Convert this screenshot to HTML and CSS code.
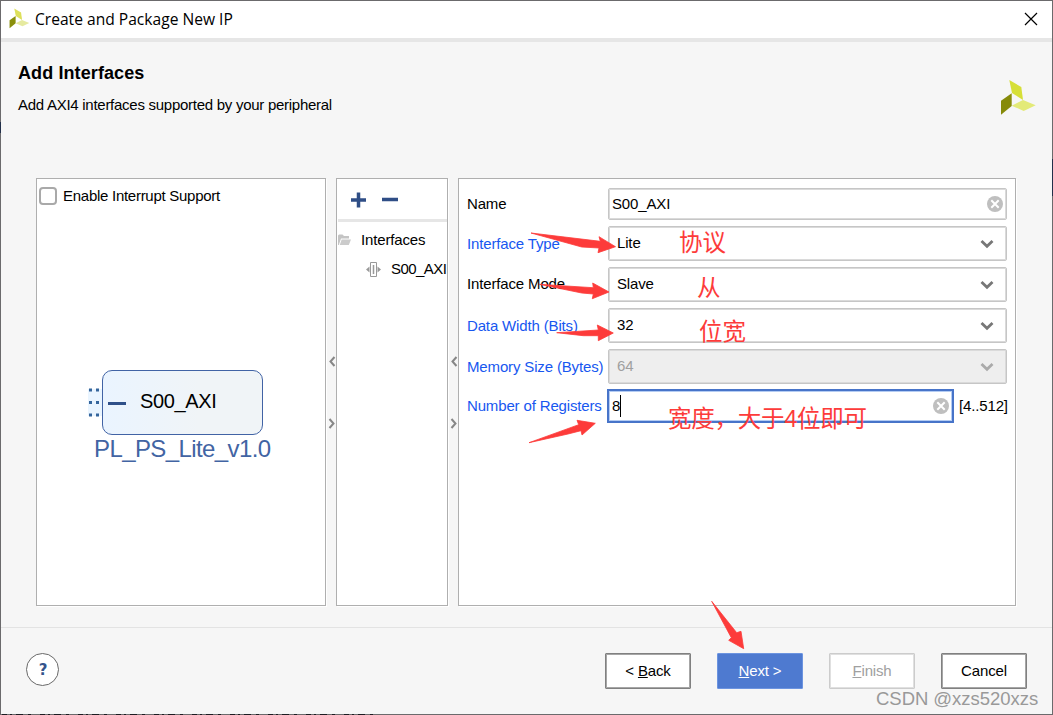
FILE: index.html
```html
<!DOCTYPE html>
<html lang="en">
<head>
  <meta charset="UTF-8" />
  <meta name="viewport" content="width=device-width, initial-scale=1" />
  <title>Create and Package New IP</title>
  <link rel="stylesheet" href="styles.css">
</head>
<body>
  <div class="dialog">
    <header class="titlebar">
      <svg class="logo-small" width="21" height="21" viewBox="1000 79 37 37">
        <polygon points="1001,100.7 1011.7,93.3 1011.7,106 1001,114.7" fill="#8a8f0c" />
        <polygon points="1009.3,80 1021.3,87 1023,100 1012,93" fill="#dde05a" />
        <polygon points="1011.7,105.7 1023,100 1035.7,105.3 1023.7,111" fill="#e6eaa0" />
      </svg>
      <span class="title">Create and Package New IP</span>
      <svg class="close" width="14" height="14" viewBox="0 0 14 14">
        <path d="M1 1L13 13M13 1L1 13" stroke="#000" stroke-width="1.2" fill="none" />
      </svg>
    </header>

    <section class="heading">
      <div>
        <h1>Add Interfaces</h1>
        <p>Add AXI4 interfaces supported by your peripheral</p>
      </div>
      <svg class="logo" width="37" height="37" viewBox="1000 79 37 37">
        <polygon points="1001,100.7 1011.7,93.3 1011.7,106 1001,114.7" fill="#868a09" />
        <polygon points="1009.3,80 1021.3,87 1023,100 1012,93" fill="#d6df38" />
        <polygon points="1011.7,105.7 1023,100 1035.7,105.3 1023.7,111" fill="#e3ea78" />
      </svg>
    </section>

    <main class="panels">
      <div class="panel preview">
        <label class="check"><span class="box"></span><span class="check-text">Enable Interrupt Support</span></label>
        <div class="block">
          <svg class="port" width="14" height="31" viewBox="0 0 14 31">
            <rect width="14" height="27" y="2" fill="#eaf5ff" />
            <path d="M1 3h14M1 15.500h14M1 28h14" stroke="#34659c" stroke-width="3" stroke-dasharray="3 4" />
          </svg>
          <div class="ip"><i class="bus"></i><span class="ip-port">S00_AXI</span></div>
        </div>
        <div class="ip-name">PL_PS_Lite_v1.0</div>
      </div>

      <div class="splitter">
        <svg width="8" height="76" viewBox="0 0 8 76"><path d="M6.500 2L2.500 6.500L6.500 11M1.500 64L5.500 68.500L1.500 73" /></svg>
      </div>

      <div class="panel tree">
        <div class="toolbar">
          <svg width="48" height="16" viewBox="0 0 48 16">
            <path d="M0 8h15M7.500 0.500v15M31 7.500h16" stroke="#2f4e86" stroke-width="3.500" />
          </svg>
        </div>
        <div class="node root">
          <svg width="13" height="12" viewBox="0 0 13 12">
            <path d="M0 11V1.500L1 .5h3.500l1.500 1.500h5v2.500H3L.8 11z" fill="#c4c4c4" />
            <path d="M3.700 5.500H13L10.800 11H1.700z" fill="#cbcbcb" />
          </svg>
          <span>Interfaces</span>
        </div>
        <div class="node leaf">
          <svg width="15" height="15" viewBox="0 0 15 15">
            <path d="M4.500 .5h6v14h-6z" fill="none" stroke="#999" />
            <path d="M7.500 3v9" stroke="#999" stroke-width="1.500" />
            <path d="M3.500 4.500v6L0 7.500zM11.500 4.500v6L15 7.500z" fill="#999" />
          </svg>
          <span>S00_AXI</span>
        </div>
      </div>

      <div class="splitter">
        <svg width="8" height="76" viewBox="0 0 8 76"><path d="M6.500 2L2.500 6.500L6.500 11M1.500 64L5.500 68.500L1.500 73" /></svg>
      </div>

      <div class="panel form">
        <div class="row name-row">
          <span class="label black">Name</span>
          <div class="field">
            <span>S00_AXI</span>
            <svg class="clear" width="16" height="16" viewBox="0 0 16 16"><circle cx="8" cy="8" r="8" fill="#bfbfbf" /><path d="M4.300 4.300l7.400 7.400M11.700 4.300l-7.400 7.400" stroke="#fff" stroke-width="2" /></svg>
          </div>
        </div>
        <div class="row">
          <span class="label">Interface Type</span>
          <div class="field select"><span>Lite</span><svg class="chevron" width="14" height="10" viewBox="0 0 14 10"><path d="M1.500 2L7 7.300L12.500 2" /></svg></div>
        </div>
        <div class="row mode-row">
          <span class="label black">Interface Mode</span>
          <div class="field select"><span>Slave</span><svg class="chevron" width="14" height="10" viewBox="0 0 14 10"><path d="M1.500 2L7 7.300L12.500 2" /></svg></div>
        </div>
        <div class="row">
          <span class="label">Data Width (Bits)</span>
          <div class="field select"><span>32</span><svg class="chevron" width="14" height="10" viewBox="0 0 14 10"><path d="M1.500 2L7 7.300L12.500 2" /></svg></div>
        </div>
        <div class="row">
          <span class="label">Memory Size (Bytes)</span>
          <div class="field select disabled"><span>64</span><svg class="chevron" width="14" height="10" viewBox="0 0 14 10"><path d="M1.500 2L7 7.300L12.500 2" /></svg></div>
        </div>
        <div class="row reg-row">
          <span class="label">Number of Registers</span>
          <div class="field focus">
            <span>8</span><i class="caret"></i>
            <svg class="clear" width="16" height="16" viewBox="0 0 16 16"><circle cx="8" cy="8" r="8" fill="#bfbfbf" /><path d="M4.300 4.300l7.400 7.400M11.700 4.300l-7.400 7.400" stroke="#fff" stroke-width="2" /></svg>
          </div>
          <span class="range">[4..512]</span>
        </div>
      </div>
    </main>

    <footer class="footer">
      <button class="help">?</button>
      <div class="buttons">
        <button class="btn">&lt; <u>B</u>ack</button>
        <button class="btn primary"><u>N</u>ext &gt;</button>
        <button class="btn off"><u>F</u>inish</button>
        <button class="btn">Cancel</button>
      </div>
    </footer>
  </div>

  <!-- notes and arrows drawn over the dialog -->
  <svg class="notes" width="1053" height="715" viewBox="0 0 1053 715">
    <path d="M2 714.500H380" stroke="#1c1c22" stroke-dasharray="5 3 2 4 7 5 3 9" />
    <path d="M.5 122v11M1052.500 159v37" stroke="#22304a" />
    <g class="arrows">
      <polygon points="531,233 600.3,241.3 599,236.700 615.5,246.700 598,252.700 599,248 581.700,247" />
      <polygon points="539.3,284.3 593.3,287.700 592.700,283 609,292 592.3,298.700 593.3,294 581.700,293" />
      <polygon points="556.700,332.700 598.3,330 597.3,325 613.3,333 598.3,340.700 598.3,335.700 583.3,335.700" />
      <polygon points="529,442.700 578.700,424.700 577,420.3 595.3,423.3 582,435 581,430.700 568,434" />
      <polygon points="711.700,601.3 736.700,632.700 741,631.3 743.700,648.700 728.700,640.3 731.3,637.700" />
    </g>
    <g class="note-text" lang="zh">
      <text x="679" y="251">协议</text>
      <text x="697" y="296">从</text>
      <text x="699" y="340">位宽</text>
      <text x="668" y="427" textLength="199">宽度，大于4位即可</text>
    </g>
    <text class="mark" x="876" y="705" textLength="162">CSDN @xzs520xzs</text>
  </svg>
</body>
</html>
```
FILE: styles.css
```css
* {
  box-sizing: border-box;
}
body {
  margin: 0;
  font-family: "Liberation Sans", Arial, sans-serif;
  font-size: 15px;
  letter-spacing: -0.15px;
  color: #000;
}
.dialog {
  width: 1053px;
  height: 715px;
  border: 1px solid #6b6a6c;
  background: #f6f6f6;
  display: flex;
  flex-direction: column;
  overflow: hidden;
}
.titlebar {
  flex: none;
  height: 41px;
  background: #fff;
  border-bottom: 4px solid #e6e6e6;
  display: flex;
  align-items: center;
  padding: 0 14px 2px 8px;
}
.title {
  font-family: "Open Sans", "Noto Sans", sans-serif;
  font-size: 15.6px;
  letter-spacing: 0;
  margin-left: 5px;
}
.close {
  margin-left: auto;
}
.heading {
  flex: none;
  height: 136px;
  padding: 20px 15px 0 17px;
  display: flex;
  justify-content: space-between;
}
.heading h1 {
  margin: 0;
  font-size: 18px;
  line-height: 22px;
  letter-spacing: 0.1px;
}
.heading p {
  margin: 11px 0 0;
  line-height: 20px;
  letter-spacing: -0.27px;
}
.logo {
  margin-top: 17px;
}
.panels {
  flex: none;
  height: 428px;
  display: flex;
  padding: 0 36px 0 35px;
}
.panel {
  background: #fff;
  border: 1px solid #afafaf;
  box-shadow: 1px 1px 0 #fff;
  overflow: hidden;
}
.preview {
  width: 290px;
}
.check {
  display: flex;
  align-items: center;
  margin: 8px 0 0 2px;
  height: 18px;
}
.check-text {
  letter-spacing: -0.27px;
  padding-bottom: 2px;
}
.box {
  width: 18px;
  height: 18px;
  border: 2px solid #a9a9a9;
  border-radius: 4px;
  margin-right: 6px;
}
.block {
  display: flex;
  align-items: center;
  margin: 165px 0 0 51px;
}
.ip {
  width: 161px;
  height: 65px;
  border: 1px solid #4163a5;
  border-radius: 10px;
  background: linear-gradient(to right, #eaf4ff, #f0f4f7 60%);
  display: flex;
  align-items: center;
  padding-left: 5px;
}
.bus {
  width: 18px;
  height: 3px;
  background: #2f5089;
  margin-top: 2px;
}
.ip-port {
  font-size: 20px;
  letter-spacing: -0.35px;
  margin: -2px 0 0 14px;
}
.ip-name {
  margin-left: 57px;
  font-size: 24px;
  line-height: 28px;
  letter-spacing: -0.6px;
  color: #4264a3;
  white-space: nowrap;
}
.splitter {
  width: 10px;
  padding: 177px 0 0 2px;
}
.splitter path {
  fill: none;
  stroke: #878787;
  stroke-width: 2;
}
.tree {
  width: 112px;
}
.toolbar {
  height: 43px;
  border-bottom: 3px solid #e6e6e6;
  margin-left: 1px;
  padding: 13px 0 0 13px;
}
.node {
  display: flex;
  align-items: center;
  height: 20px;
  white-space: nowrap;
}
.node span {
  padding-bottom: 2px;
}
.node svg {
  flex: none;
}
.root {
  margin: 8px 0 0 1px;
  gap: 10px;
}
.leaf {
  margin: 9px 0 0 29px;
  gap: 10px;
  letter-spacing: -0.55px;
}
.form {
  width: 558px;
  padding: 9px 8px 0;
  display: flex;
  flex-direction: column;
  gap: 6px;
}
.row {
  display: flex;
  align-items: center;
  height: 35px;
}
.name-row {
  height: 32px;
}
.name-row span,
.mode-row .label,
.reg-row span {
  padding-bottom: 2px;
}
.reg-row {
  height: 34px;
  margin-top: -1px;
}
.label {
  width: 141px;
  flex: none;
  color: #1757f0;
  white-space: nowrap;
}
.black {
  color: #000;
}
.field {
  flex: 1;
  height: 100%;
  border: 1px solid #c6c6c6;
  border-radius: 2px;
  box-shadow: inset 0 0 0 1px #dadada;
  background: #fff;
  display: flex;
  align-items: center;
  padding: 0 3px;
}
.field svg {
  margin-left: auto;
}
.select {
  padding: 0 12px 0 8px;
}
.select span {
  margin-top: -2px;
}
.chevron path {
  fill: none;
  stroke: #777;
  stroke-width: 2.8;
}
.disabled {
  background: #eee;
  color: #a0a0a0;
}
.disabled .chevron path {
  stroke: #aaa;
}
.focus {
  flex: none;
  width: 347px;
  margin-left: -1px;
  border: 2px solid #4774c9;
  border-radius: 0;
  box-shadow: inset 0 0 0 1px #b4ccf3;
}
.caret {
  width: 1px;
  height: 22px;
  background: #000;
}
.range {
  margin-left: 5px;
}
.footer {
  flex: none;
  height: 87px;
  margin-top: 21px;
  border-top: 1px solid #e3e3e3;
  padding: 25px 25px 0;
  display: flex;
  justify-content: space-between;
  align-items: flex-start;
}
.help {
  width: 33px;
  height: 33px;
  padding: 1px 0 0 1px;
  border: 1px solid #696969;
  border-radius: 50%;
  background: #fff;
  font-family: "DejaVu Sans", sans-serif;
  font-size: 15px;
  font-weight: bold;
  color: #34548c;
}
.buttons {
  display: flex;
  gap: 26px;
}
.btn {
  width: 86px;
  height: 36px;
  padding: 0 0 2px;
  border: 1px solid #808080;
  border-radius: 1px;
  box-shadow: inset 0 0 0 1px #a6a6a6;
  background: #fff;
  font-family: inherit;
  font-size: 15px;
  letter-spacing: -0.15px;
  color: #000;
}
.primary {
  background: #4e7ad0;
  border-color: #6c94e0;
  box-shadow: none;
  color: #fff;
}
.off {
  border-color: #ccc;
  box-shadow: inset 0 0 0 1px #e0e0e0;
  color: #a0a0a0;
}
.notes {
  position: absolute;
  left: 0;
  top: 0;
  pointer-events: none;
}
.arrows {
  fill: #fd3b3a;
  stroke: #fd3b3a;
  stroke-width: 0.8;
}
.note-text {
  font-family: "Liberation Sans", "Noto Sans CJK SC", sans-serif;
  font-size: 23.5px;
  letter-spacing: 0;
  fill: #fd3b3a;
}
.mark {
  font-family: "Liberation Sans", sans-serif;
  font-size: 18.5px;
  fill: #999;
}
```
